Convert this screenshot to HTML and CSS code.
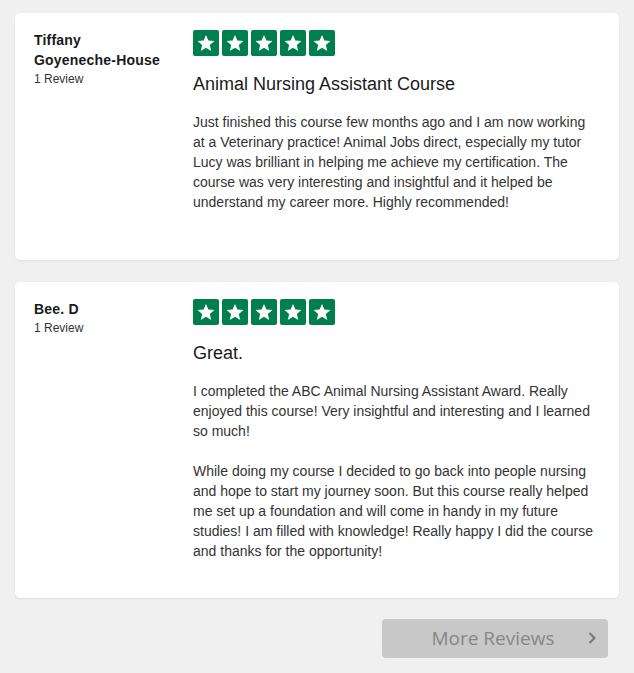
FILE: index.html
```html
<!DOCTYPE html>
<html>
<head>
<meta charset="utf-8">
<link rel="stylesheet" href="styles.css">
</head>
<body>
<div class="page">
  <div class="card card-first">
    <div class="author">
      <div class="author-name">Tiffany <span class="nowrap">Goyeneche-House</span></div>
      <div class="author-count">1 Review</div>
    </div>
    <div class="review">
      <div class="stars">
        <span class="star"><svg viewBox="0 0 24 24"><path d="M12 3.2l2.6 6.1 6.6.5-5 4.3 1.5 6.5L12 17.1l-5.7 3.5 1.5-6.5-5-4.3 6.6-.5z"/></svg></span>
        <span class="star"><svg viewBox="0 0 24 24"><path d="M12 3.2l2.6 6.1 6.6.5-5 4.3 1.5 6.5L12 17.1l-5.7 3.5 1.5-6.5-5-4.3 6.6-.5z"/></svg></span>
        <span class="star"><svg viewBox="0 0 24 24"><path d="M12 3.2l2.6 6.1 6.6.5-5 4.3 1.5 6.5L12 17.1l-5.7 3.5 1.5-6.5-5-4.3 6.6-.5z"/></svg></span>
        <span class="star"><svg viewBox="0 0 24 24"><path d="M12 3.2l2.6 6.1 6.6.5-5 4.3 1.5 6.5L12 17.1l-5.7 3.5 1.5-6.5-5-4.3 6.6-.5z"/></svg></span>
        <span class="star"><svg viewBox="0 0 24 24"><path d="M12 3.2l2.6 6.1 6.6.5-5 4.3 1.5 6.5L12 17.1l-5.7 3.5 1.5-6.5-5-4.3 6.6-.5z"/></svg></span>
      </div>
      <h3 class="review-title">Animal Nursing Assistant Course</h3>
      <p class="review-body">Just finished this course few months ago and I am now working at a Veterinary practice! Animal Jobs direct, especially my tutor Lucy was brilliant in helping me achieve my certification. The course was very interesting and insightful and it helped be understand my career more. Highly recommended!</p>
    </div>
  </div>

  <div class="card card-second">
    <div class="author">
      <div class="author-name">Bee. D</div>
      <div class="author-count">1 Review</div>
    </div>
    <div class="review">
      <div class="stars">
        <span class="star"><svg viewBox="0 0 24 24"><path d="M12 3.2l2.6 6.1 6.6.5-5 4.3 1.5 6.5L12 17.1l-5.7 3.5 1.5-6.5-5-4.3 6.6-.5z"/></svg></span>
        <span class="star"><svg viewBox="0 0 24 24"><path d="M12 3.2l2.6 6.1 6.6.5-5 4.3 1.5 6.5L12 17.1l-5.7 3.5 1.5-6.5-5-4.3 6.6-.5z"/></svg></span>
        <span class="star"><svg viewBox="0 0 24 24"><path d="M12 3.2l2.6 6.1 6.6.5-5 4.3 1.5 6.5L12 17.1l-5.7 3.5 1.5-6.5-5-4.3 6.6-.5z"/></svg></span>
        <span class="star"><svg viewBox="0 0 24 24"><path d="M12 3.2l2.6 6.1 6.6.5-5 4.3 1.5 6.5L12 17.1l-5.7 3.5 1.5-6.5-5-4.3 6.6-.5z"/></svg></span>
        <span class="star"><svg viewBox="0 0 24 24"><path d="M12 3.2l2.6 6.1 6.6.5-5 4.3 1.5 6.5L12 17.1l-5.7 3.5 1.5-6.5-5-4.3 6.6-.5z"/></svg></span>
      </div>
      <h3 class="review-title">Great.</h3>
      <p class="review-body">I completed the ABC Animal Nursing Assistant Award. Really enjoyed this course! Very insightful and interesting and I learned so much!<br><br>While doing my course I decided to go back into people nursing and hope to start my journey soon. But this course really helped me set up a foundation and will come in handy in my future studies! I am filled with knowledge! Really happy I did the course and thanks for the opportunity!</p>
    </div>
  </div>

  <div class="actions">
    <button class="more-btn">More Reviews<span class="chev"><svg viewBox="0 0 10 14"><path d="M2.5 2l5 5-5 5" fill="none" stroke="#777" stroke-width="2"/></svg></span></button>
  </div>
</div>
</body>
</html>
```

FILE: styles.css
```css
html, body {
  margin: 0;
  padding: 0;
  background: #f0f0f0;
}
body {
  font-family: "Liberation Sans", Arial, sans-serif;
  color: #333;
}
.page {
  width: 604px;
  padding: 13px 0 0 15px;
}
.card {
  background: #fff;
  border-radius: 5px;
  box-shadow: 0 1px 2px rgba(0, 0, 0, 0.08);
  display: flex;
  padding: 17px 20px 0 19px;
  box-sizing: border-box;
}
.card-first {
  height: 247px;
  margin-bottom: 22px;
}
.card-second {
  height: 316px;
}
.author {
  width: 159px;
  flex: none;
}
.author-name {
  font-size: 14px;
  font-weight: bold;
  letter-spacing: 0.2px;
  line-height: 20px;
  color: #1a1a1a;
  width: 118px;
}
.nowrap {
  white-space: nowrap;
}
.author-count {
  font-size: 12px;
  line-height: 16px;
  color: #333;
  margin-top: 1px;
}
.review {
  flex: 1;
  min-width: 0;
}
.stars {
  display: flex;
  gap: 3px;
  height: 26px;
}
.star {
  width: 26px;
  height: 26px;
  background: #007f4e;
  border-radius: 2px;
  display: flex;
  align-items: center;
  justify-content: center;
}
.star svg {
  width: 22px;
  height: 22px;
  fill: #fff;
}
.review-title {
  margin: 16px 0 0;
  font-size: 18px;
  font-weight: normal;
  line-height: 24px;
  color: #1a1a1a;
}
.review-body {
  margin: 16px 0 0;
  font-size: 14px;
  line-height: 20px;
  color: #333;
}
.actions {
  display: flex;
  justify-content: flex-end;
  padding: 21px 11px 0 0;
}
.more-btn {
  position: relative;
  width: 226px;
  height: 39px;
  border: none;
  border-radius: 4px;
  background: #c8c8c8;
  color: #878787;
  font-family: "Open Sans", sans-serif;
  font-size: 19px;
  padding: 0 4px 0 0;
  line-height: 39px;
}
.chev {
  position: absolute;
  right: 11px;
  top: 12px;
  width: 10px;
  height: 14px;
  display: block;
}
.chev svg {
  width: 10px;
  height: 14px;
  display: block;
}
```
